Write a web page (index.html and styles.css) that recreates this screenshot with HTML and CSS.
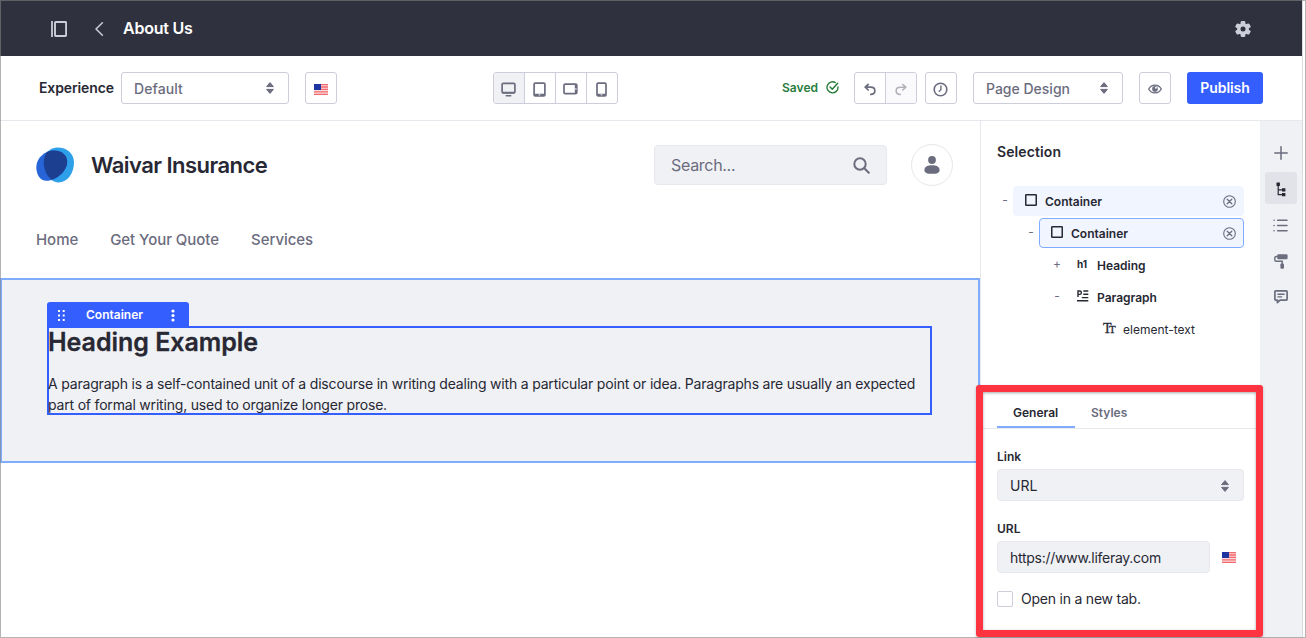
FILE: index.html
```html
<!DOCTYPE html>
<html lang="en">
<head>
<meta charset="utf-8">
<title>About Us</title>
<link rel="stylesheet" href="styles.css">
</head>
<body>
<svg class="defs" aria-hidden="true">
  <symbol id="flag" viewBox="0 0 14 11"><rect width="14" height="11" fill="#fbdcdc"/><path d="M0 .6h14M0 3h14M0 5.4h14M0 7.8h14M0 10.3h14" stroke="#f26a6d" stroke-width="1.3"/><rect width="7" height="6" fill="#1e34a0"/></symbol>
  <symbol id="sort" viewBox="0 0 10 14"><path d="M1.6 5.6 5 1.6l3.4 4zM1.6 8.4 5 12.4l3.4-4z" fill="#6b6c7e" stroke="#6b6c7e" stroke-width="1" stroke-linejoin="round"/></symbol>
  <symbol id="box" viewBox="0 0 12 12"><rect x=".75" y=".75" width="10.5" height="10.5" rx=".6" fill="none" stroke="#272833" stroke-width="1.5"/></symbol>
  <symbol id="remove" viewBox="0 0 13 13"><circle cx="6.5" cy="6.5" r="5.8" fill="none" stroke="#6b6c7e" stroke-width="1.1"/><path d="m4.2 4.2 4.6 4.6m0-4.6L4.2 8.8" stroke="#6b6c7e" stroke-width="1.3" stroke-linecap="round"/></symbol>
</svg>
<div class="app">
  <header class="topbar">
    <svg class="ic-panel" width="16" height="16" viewBox="0 0 16 16" fill="none" stroke="#cdced9"><path d="M1 0v16" stroke-width="1.8"/><rect x="4" y=".95" width="11.100" height="14.100" rx=".7" stroke-width="1.900"/></svg>
    <svg class="ic-back" width="9" height="14" viewBox="0 0 9 14" fill="none" stroke="#cdced9" stroke-width="1.5" stroke-linecap="round" stroke-linejoin="round"><path d="M7.4.8 1 7l6.400 6.200"/></svg>
    <h1>About Us</h1>
    <svg class="ic-gear" width="16" height="16" viewBox="0 0 16 16"><g fill="#cdced9"><circle cx="8" cy="8" r="5.9"/><rect x="5.700" width="4.600" height="16" rx="1.2"/><rect x="5.700" width="4.600" height="16" rx="1.2" transform="rotate(60 8 8)"/><rect x="5.700" width="4.600" height="16" rx="1.2" transform="rotate(120 8 8)"/></g><circle cx="8" cy="8" r="2.5" fill="#30313f"/></svg>
  </header>

  <div class="toolbar">
    <span class="exp-label">Experience</span>
    <div class="select exp"><span>Default</span><svg width="10" height="14"><use href="#sort"/></svg></div>
    <div class="btn lang"><svg width="14" height="11"><use href="#flag"/></svg></div>
    <div class="group devices">
      <i class="on"><svg width="15" height="15" viewBox="0 0 15 15" fill="none" stroke="#6b6c7e"><rect x="1.1" y="1.3" width="12.8" height="9.6" rx="1.2" stroke-width="1.7"/><path d="M1.5 10.6h12" stroke-width="1.8"/><path d="M5.3 13.8h4.4" stroke-width="1.6" stroke-linecap="round"/></svg></i>
      <i><svg width="13" height="15" viewBox="0 0 13 15" fill="none" stroke="#6b6c7e"><rect x="1.1" y="1.2" width="10.8" height="12.6" rx="1.1" stroke-width="1.7"/><path d="M1.5 12.7h10" stroke-width="2"/><path d="M5.7 12.9h1.6" stroke="#fff" stroke-width="1"/></svg></i>
      <i><svg width="15" height="12" viewBox="0 0 15 12" fill="none" stroke="#6b6c7e"><rect x="1" y="1.1" width="12.8" height="9.6" rx="1.2" stroke-width="1.7"/><path d="M12.8 1.5v9" stroke-width="2"/><path d="M12.9 5.1v1.6" stroke="#fff" stroke-width="1"/></svg></i>
      <i><svg width="11" height="15" viewBox="0 0 11 15" fill="none" stroke="#6b6c7e"><rect x="1" y="1.2" width="9" height="12.6" rx="1.1" stroke-width="1.7"/><path d="M1.5 12.6h8" stroke-width="1.8"/><path d="M4.7 12.8h1.6" stroke="#fff" stroke-width="1"/></svg></i>
    </div>
    <span class="saved">Saved</span>
    <svg class="ic-check" width="13" height="13" viewBox="0 0 13 13" fill="none" stroke="#287d3c" stroke-linecap="round" stroke-linejoin="round"><path d="M9.3 1.6A5.5 5.5 0 1 0 12 6" stroke-width="1.4"/><path d="m4.1 6 2.2 2.3 5.4-6" stroke-width="1.5"/></svg>
    <div class="group undo">
      <i><svg width="12" height="13" viewBox="0 0 12 13" fill="none" stroke="#6b6c7e" stroke-width="1.7" stroke-linecap="round" stroke-linejoin="round"><path d="M4.200 1.500 1.200 4.200l3 2.800M1.600 4.200h5.200c5.400 0 5.400 7.200 0 7.200"/></svg></i>
      <i class="off"><svg width="12" height="13" viewBox="0 0 12 13" fill="none" stroke="#b1b2b9" stroke-width="1.600" stroke-linecap="round" stroke-linejoin="round"><path d="m7.800 1.500 3 2.700-3 2.800M10.400 4.200H5.200c-5.400 0-5.400 7.200 0 7.200"/></svg></i>
    </div>
    <div class="btn history"><svg width="15" height="15" viewBox="0 0 15 15" fill="none" stroke="#6b6c7e" stroke-linecap="round"><circle cx="7.500" cy="7.500" r="6.300" stroke-width="1.600"/><path d="M7.900 4v3.800L6.200 9.300" stroke-width="1.400"/></svg></div>
    <div class="select mode"><span>Page Design</span><svg width="10" height="14"><use href="#sort"/></svg></div>
    <div class="btn eye"><svg width="14" height="10" viewBox="0 0 14 10"><path d="M.7 5C3.400-.2 10.600-.2 13.300 5 10.600 10.200 3.400 10.200.7 5z" fill="none" stroke="#6b6c7e" stroke-width="1.300"/><circle cx="7" cy="4.900" r="2.800" fill="#6b6c7e"/><circle cx="7.900" cy="3.800" r="1" fill="#fff"/></svg></div>
    <button class="publish">Publish</button>
  </div>

  <div class="body">
    <main class="canvas">
      <div class="brand">
        <svg width="38" height="36" viewBox="0 0 38 36"><path d="M21 .5c9-.4 17 5.500 17 15C38 26 31.500 35.500 22.500 35.500 14 35.500 7.800 26 7.800 15.500 7.800 7 13 .8 21 .5z" fill="#2e9fe9"/><path d="M18 3.500c7.500 0 13.200 4.500 13.200 11.500C31.200 24 21 33.800 10.500 33.800 4 33.800.3 27.500.3 20 .3 11 9 3.500 18 3.500z" fill="#2764d8"/><path d="M18 3.500c7.500 0 13.200 4.500 13.200 11.500 0 7-7 14.800-15.700 17.700C10.500 28.500 7.800 22 7.800 15.500c0-4 1.200-7.800 3.200-10.500 2.200-1 4.500-1.500 7-1.500z" fill="#1c3f90"/></svg>
        <strong>Waivar Insurance</strong>
        <div class="search"><span>Search...</span><svg width="17" height="17" viewBox="0 0 17 17" fill="none" stroke="#6b6c7e" stroke-width="2" stroke-linecap="round"><circle cx="7" cy="7" r="5.700"/><path d="m11.300 11.300 4.500 4.500"/></svg></div>
        <div class="avatar"><svg width="16" height="18" viewBox="0 0 16 18" fill="#6b6c7e"><circle cx="8" cy="4" r="3.900"/><path d="M.4 14C.4 10.500 4 9.200 8 9.200s7.600 1.300 7.600 4.800c0 3-2.600 3.800-7.600 3.800S.4 17 .4 14z"/></svg></div>
      </div>
      <nav class="nav"><a>Home</a><a>Get Your Quote</a><a>Services</a></nav>
      <section class="outer">
        <div class="tag">
          <svg width="7" height="11" viewBox="0 0 7 11" fill="#fff"><path d="M0 0h2v2H0zM0 4.500h2v2H0zM0 9h2v2H0zM4.700 0h2v2h-2zM4.700 4.500h2v2h-2zM4.700 9h2v2h-2z"/></svg>
          <span>Container</span>
          <svg width="4" height="13" viewBox="0 0 4 13" fill="#fff"><circle cx="2" cy="2" r="1.600"/><circle cx="2" cy="6.500" r="1.600"/><circle cx="2" cy="11" r="1.600"/></svg>
        </div>
        <div class="inner">
          <h2>Heading Example</h2>
          <p>A paragraph is a self-contained unit of a discourse in writing dealing with a particular point or idea. Paragraphs are usually an expected<br>part of formal writing, used to organize longer prose.</p>
        </div>
      </section>
    </main>

    <aside class="panel">
      <h3>Selection</h3>
      <div class="tree">
        <div class="row r1"><b class="tog">-</b><div class="node"><svg width="12" height="12"><use href="#box"/></svg><span>Container</span><svg class="x" width="13" height="13"><use href="#remove"/></svg></div></div>
        <div class="row r2"><b class="tog">-</b><div class="node sel"><svg width="12" height="12"><use href="#box"/></svg><span>Container</span><svg class="x" width="13" height="13"><use href="#remove"/></svg></div></div>
        <div class="row r3"><b class="tog">+</b><div class="node"><b class="h1ic">h1</b><span>Heading</span></div></div>
        <div class="row r3"><b class="tog">-</b><div class="node"><svg width="12" height="12" viewBox="0 0 12 12" fill="none" stroke="#272833" stroke-width="1.400"><path d="M1 7V1h1.700a1.700 1.700 0 0 1 0 3.400H1M6.300 1h5M6.300 4.200h5M4.800 7.600h6.500M0 10.800h11.300"/></svg><span>Paragraph</span></div></div>
        <div class="row r4"><div class="node"><b class="ttic">T<small>T</small></b><span>element-text</span></div></div>
      </div>
      <div class="config">
        <div class="tabs"><span class="active">General</span><span>Styles</span></div>
        <div class="form">
          <label>Link</label>
          <div class="field"><span>URL</span><svg width="10" height="14"><use href="#sort"/></svg></div>
          <label>URL</label>
          <div class="line"><div class="field"><span class="url">https://www.liferay.com</span></div><svg width="14" height="11"><use href="#flag"/></svg></div>
          <div class="check"><i></i><span>Open in a new tab.</span></div>
        </div>
      </div>
    </aside>

    <div class="rail">
      <i><svg width="14" height="14" viewBox="0 0 14 14" stroke="#6b6c7e" stroke-width="1.500" stroke-linecap="round"><path d="M7 .8v12.400M.8 7h12.400"/></svg></i>
      <i class="on"><svg width="10" height="15" viewBox="0 0 10 15" fill="none" stroke="#272833"><path d="M2.200 2v10.700h5M2.200 7.800h5" stroke-width="1.200"/><path d="M.5.500h3.400v3.400H.5zM6 6.200h3.400v3.200H6zM6 11.100h3.400v3.200H6z" fill="#272833" stroke="none"/></svg></i>
      <i><svg width="15" height="13" viewBox="0 0 15 13" stroke="#6b6c7e" stroke-width="1.500" stroke-linecap="round"><path d="M4.600 1.200h9.400M4.600 6.500h9.400M4.600 11.800h9.400M1 1.200h.1M1 6.500h.1M1 11.800h.1"/></svg></i>
      <i><svg width="14" height="15" viewBox="0 0 14 15"><rect x="3.200" y=".3" width="10.400" height="5" rx="1.300" fill="#6b6c7e"/><path d="M3.500 2.500H2.200Q.8 2.500.8 4v2q0 1.300 1.400 1.300h6V10" fill="none" stroke="#6b6c7e" stroke-width="1.400"/><rect x="6.400" y="9.400" width="3.600" height="5.400" rx="1" fill="#6b6c7e"/></svg></i>
      <i><svg width="14" height="14" viewBox="0 0 14 14" fill="none" stroke="#6b6c7e" stroke-width="1.700"><path d="M1.700.9h10.600q.8 0 .8.800v7.600q0 .8-.8.800H6l-2.600 2.600v-2.600H1.700q-.8 0-.8-.8V1.700q0-.8.8-.8z" stroke-linejoin="round"/><path d="M3.400 4.200h7.200M3.400 6.900h4.800" stroke-width="1.400"/></svg></i>
    </div>
  </div>
</div>
<div class="frame"></div>
<div class="highlight"></div>
</body>
</html>
```
FILE: styles.css
```css
* { box-sizing: border-box; }
body { margin: 0; width: 1306px; height: 638px; overflow: hidden; position: relative; background: #fff; color: #272833; font-family: Inter, "Liberation Sans", sans-serif; font-size: 14px; }
h1, h2, h3, p { margin: 0; }
svg { display: block; flex: none; }
i { font-style: normal; }
span { white-space: nowrap; }
.defs { position: absolute; width: 0; height: 0; }
.app { width: 1303px; height: 638px; display: flex; flex-direction: column; border-right: 1px solid #dcdcdf; }

.topbar { height: 56px; background: #30313f; display: flex; align-items: center; padding: 2px 51px 0 51px; }
.ic-back { margin-left: 28px; }
.topbar h1 { margin-left: 19px; color: #fff; font-size: 16px; font-weight: 600; letter-spacing: -.22px; margin-top: -2px; }
.ic-gear { margin-left: auto; }

.toolbar { height: 65px; display: flex; align-items: center; padding: 0 0 1px 39px; border-bottom: 1px solid #e7e7ed; }
.exp-label { width: 82px; font-size: 14px; font-weight: 600; letter-spacing: -.12px; margin-top: -1px; }
.select { height: 32px; border: 1px solid #cdced9; border-radius: 3px; display: flex; align-items: center; justify-content: space-between; padding: 1px 12px 0; color: #6b6c7e; font-weight: 500; font-size: 14px; }
.exp { width: 168px; padding-right: 13px; letter-spacing: .08px; }
.btn { width: 32px; height: 32px; border: 1px solid #cdced9; border-radius: 3px; display: flex; align-items: center; justify-content: center; }
.lang { margin-left: 16px; padding-top: 3px; }
.group { display: flex; height: 32px; border: 1px solid #cdced9; border-radius: 3px; overflow: hidden; }
.group i { flex: 1; display: flex; align-items: center; justify-content: center; padding: 3px 1px 0 0; }
.group i + i { border-left: 1px solid #cdced9; }
.group .on { background: #f0f1f5; }
.devices { width: 125px; margin-left: 156px; }
.saved { width: 43px; margin-left: 164px; color: #287d3c; font-size: 12px; font-weight: 600; letter-spacing: .05px; }
.ic-check { margin-left: 1px; margin-top: -1px; }
.undo { width: 63px; margin-left: 15px; }
.group .off { background: #fafafc; }
.history { margin-left: 8px; padding: 3px 1px 0 0; }
.mode { width: 150px; margin-left: 16px; padding-right: 13px; }
.eye { margin-left: 16px; padding: 3px 1px 0 0; }
.publish { width: 76px; height: 32px; margin-left: 16px; padding: 0; border: 0; border-radius: 3px; background: #355eff; color: #fff; font: 600 14px Inter, sans-serif; letter-spacing: -.05px; }

.body { flex: 1; display: flex; min-height: 0; }
.canvas { width: 980px; }
.brand { display: flex; align-items: center; height: 42px; margin-top: 23px; padding-left: 36px; }
.brand strong { margin-left: 17px; width: 562px; padding-top: 0; white-space: nowrap; font-size: 22px; font-weight: 600; letter-spacing: -.54px; }
.search { width: 233px; height: 40px; margin-left: 1px; background: #f0f1f5; border: 1px solid #e7e7ed; border-radius: 4px; display: flex; align-items: center; justify-content: space-between; padding: 0 16px; color: #6b6c7e; font-size: 16px; letter-spacing: -.3px; }
.avatar { width: 42px; height: 42px; margin-left: 24px; border: 1px solid #e7e7ed; border-radius: 50%; display: flex; align-items: center; justify-content: center; }
.nav { display: flex; gap: 32px; padding: 44px 0 0 36px; height: 92px; color: #6b6c7e; font-weight: 500; font-size: 15px; line-height: 20px; letter-spacing: -.05px; }
.nav a { white-space: nowrap; }
.outer { height: 185px; background: #f0f1f5; border: 2px solid #80acff; padding: 22px 45px 0; }
.tag { width: 142px; height: 24px; border-radius: 3px 3px 0 0; background: #355eff; color: #fff; display: flex; align-items: center; justify-content: space-between; padding: 2px 14px 0 11px; font-size: 12px; font-weight: 600; }
.tag span { letter-spacing: 0; margin: -2px 0 0 4px; }
.tag span + svg { margin-left: 11px; }
.inner { width: 885px; height: 89px; border: 2px solid #355eff; }
.inner h2 { font-size: 25px; line-height: 30px; font-weight: 600; margin-left: -1px; margin-top: -1px; letter-spacing: -.03px; -webkit-text-stroke: .3px #272833; }
.inner p { font-size: 14px; line-height: 21px; margin: 16px 0 0 -1px; letter-spacing: -.19px; white-space: nowrap; }

.panel { width: 280px; border-left: 1px solid #e7e7ed; }
.panel h3 { margin: 22px 0 0 16px; font-size: 14px; font-weight: 600; line-height: 18px; letter-spacing: .1px; }
.tree { padding: 25px 16px 0 0; display: grid; gap: 2px; font-size: 12px; font-weight: 600; }
.row { display: flex; height: 30px; }
.tog { width: 16px; text-align: center; color: #6b6c7e; font-size: 12px; font-weight: 400; line-height: 28px; }
.node { flex: 1; display: flex; align-items: center; border: 1px solid transparent; border-radius: 4px; padding: 0 7px 0 11px; }
.node > svg:first-child { margin-top: -2px; }
.node > span { margin-left: 8px; }
.x { margin-left: auto; }
.r1 .node, .r2 .node { background: #f0f5ff; }
.r2 .sel { border-color: #80acff; }
.r1 { padding-left: 16px; }
.r2 { padding-left: 42px; }
.r3 { padding-left: 68px; }
.r4 { padding-left: 110px; font-weight: 400; }
.h1ic { width: 12px; font-size: 10px; font-weight: 700; letter-spacing: -.2px; margin-top: -2px; }
.ttic { width: 12px; font: 400 14px "Liberation Serif", serif; white-space: nowrap; letter-spacing: -2.500px; -webkit-text-stroke: .3px #272833; }
.ttic small { font-size: 11px; }

.config { margin-top: 44px; }
.tabs { height: 41px; display: flex; padding-left: 16px; border-bottom: 1px solid #e7e7ed; font-size: 12px; font-weight: 600; color: #6b6c7e; }
.tabs span { padding: 10px 16px 0; height: 40px; line-height: 30px; }
.tabs .active { width: 78px; color: #272833; border-bottom: 2px solid #80acff; }
.form { padding: 20px 16px 0; }
.form label { display: block; font-size: 12px; font-weight: 600; line-height: 16px; height: 20px; }
.field { height: 32px; border: 1px solid #e7e7ed; border-radius: 4px; background: #f0f1f5; display: flex; align-items: center; justify-content: space-between; padding: 1px 13px 0 12px; font-size: 14px; }
.form label + .field { margin-bottom: 20px; }
.url { letter-spacing: -.27px; }
.line { display: flex; align-items: center; gap: 12px; }
.line .field { width: 213px; }
.check { display: flex; align-items: center; gap: 8px; margin-top: 17px; font-size: 14px; letter-spacing: -.22px; }
.check i { width: 16px; height: 16px; border: 1px solid #cdced9; border-radius: 2px; }

.rail { width: 42px; background: #f0f1f5; display: flex; flex-direction: column; gap: 4px; padding: 15px 5px; }
.rail i { width: 32px; height: 32px; border-radius: 3px; display: flex; align-items: center; justify-content: center; padding: 2px 1px 0 0; }
.rail .on { background: #e2e3e9; }

.frame { position: absolute; inset: 0; border: 1px solid rgba(130,130,130,.6); }
.highlight { position: absolute; left: 976px; top: 385px; width: 287px; height: 252px; border: 7px solid #ff3440; border-radius: 3px; box-shadow: 0 1px 3px rgba(0,0,0,.25), inset 0 1px 3px rgba(0,0,0,.35); }
```
